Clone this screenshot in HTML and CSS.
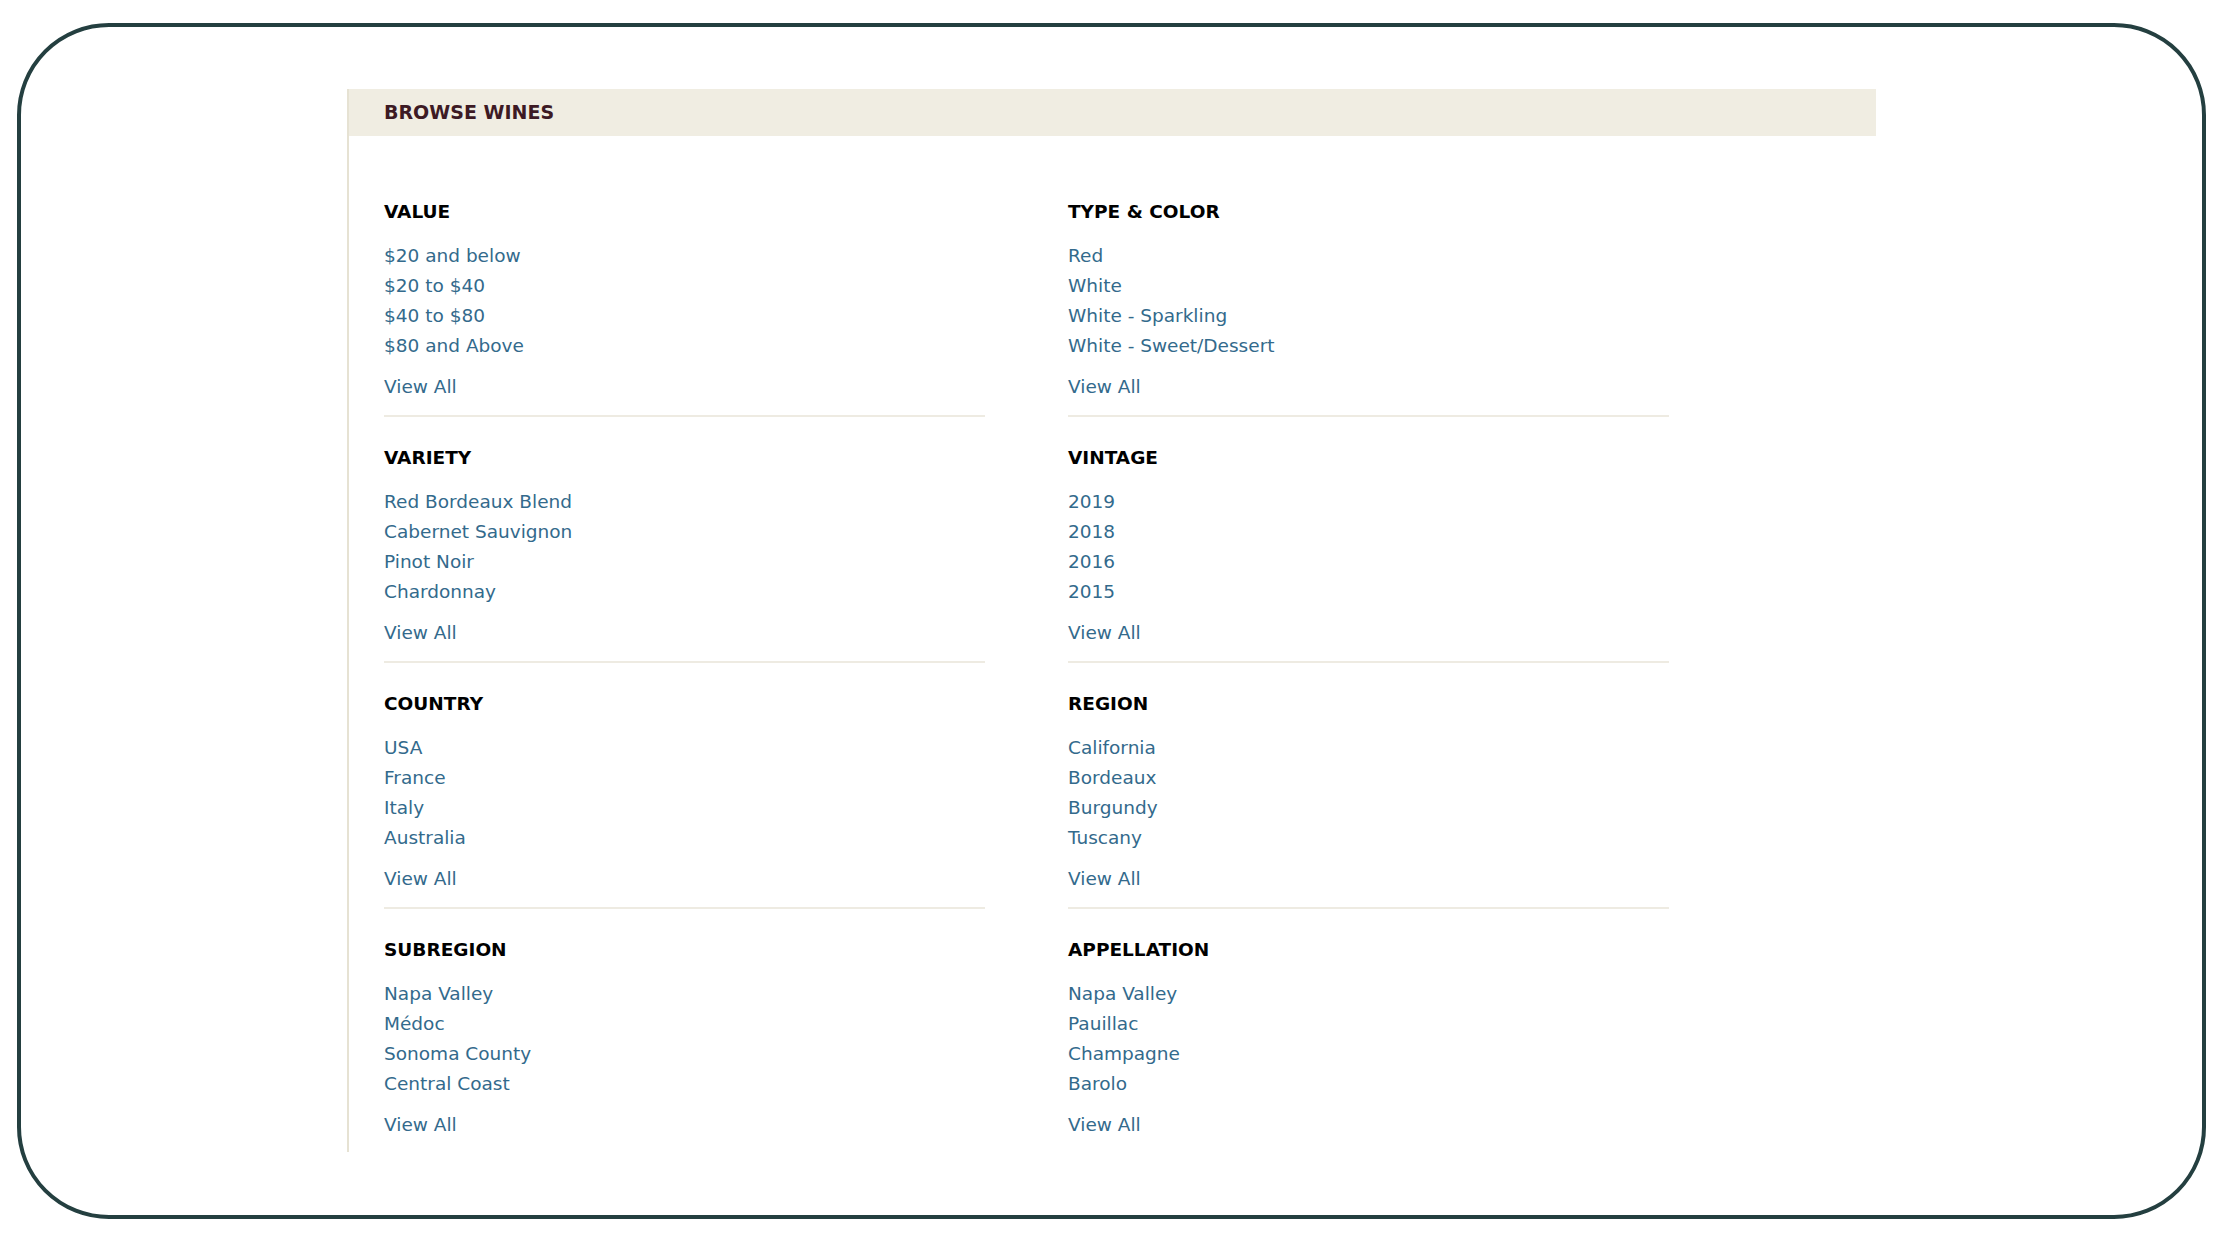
FILE: index.html
```html
<!DOCTYPE html>
<html lang="en">
<head>
<meta charset="utf-8">
<title>Browse Wines</title>
<link rel="stylesheet" href="styles.css">
</head>
<body>
<div class="frame">
  <div class="browse">
    <div class="browse-header">BROWSE WINES</div>
    <div class="browse-body">
      <section class="group">
        <h3 class="group-title">VALUE</h3>
        <ul class="group-list">
          <li><a href="#">$20 and below</a></li>
          <li><a href="#">$20 to $40</a></li>
          <li><a href="#">$40 to $80</a></li>
          <li><a href="#">$80 and Above</a></li>
        </ul>
        <a class="view-all" href="#">View All</a>
      </section>
      <section class="group">
        <h3 class="group-title">TYPE &amp; COLOR</h3>
        <ul class="group-list">
          <li><a href="#">Red</a></li>
          <li><a href="#">White</a></li>
          <li><a href="#">White - Sparkling</a></li>
          <li><a href="#">White - Sweet/Dessert</a></li>
        </ul>
        <a class="view-all" href="#">View All</a>
      </section>
      <section class="group">
        <h3 class="group-title">VARIETY</h3>
        <ul class="group-list">
          <li><a href="#">Red Bordeaux Blend</a></li>
          <li><a href="#">Cabernet Sauvignon</a></li>
          <li><a href="#">Pinot Noir</a></li>
          <li><a href="#">Chardonnay</a></li>
        </ul>
        <a class="view-all" href="#">View All</a>
      </section>
      <section class="group">
        <h3 class="group-title">VINTAGE</h3>
        <ul class="group-list">
          <li><a href="#">2019</a></li>
          <li><a href="#">2018</a></li>
          <li><a href="#">2016</a></li>
          <li><a href="#">2015</a></li>
        </ul>
        <a class="view-all" href="#">View All</a>
      </section>
      <section class="group">
        <h3 class="group-title">COUNTRY</h3>
        <ul class="group-list">
          <li><a href="#">USA</a></li>
          <li><a href="#">France</a></li>
          <li><a href="#">Italy</a></li>
          <li><a href="#">Australia</a></li>
        </ul>
        <a class="view-all" href="#">View All</a>
      </section>
      <section class="group">
        <h3 class="group-title">REGION</h3>
        <ul class="group-list">
          <li><a href="#">California</a></li>
          <li><a href="#">Bordeaux</a></li>
          <li><a href="#">Burgundy</a></li>
          <li><a href="#">Tuscany</a></li>
        </ul>
        <a class="view-all" href="#">View All</a>
      </section>
      <section class="group last">
        <h3 class="group-title">SUBREGION</h3>
        <ul class="group-list">
          <li><a href="#">Napa Valley</a></li>
          <li><a href="#">Médoc</a></li>
          <li><a href="#">Sonoma County</a></li>
          <li><a href="#">Central Coast</a></li>
        </ul>
        <a class="view-all" href="#">View All</a>
      </section>
      <section class="group last">
        <h3 class="group-title">APPELLATION</h3>
        <ul class="group-list">
          <li><a href="#">Napa Valley</a></li>
          <li><a href="#">Pauillac</a></li>
          <li><a href="#">Champagne</a></li>
          <li><a href="#">Barolo</a></li>
        </ul>
        <a class="view-all" href="#">View All</a>
      </section>
    </div>
  </div>
</div>
</body>
</html>
```

FILE: styles.css
```css
html, body {
  margin: 0;
  padding: 0;
  background: #ffffff;
}

body {
  font-family: "DejaVu Sans", Verdana, sans-serif;
  font-size: 18.5px;
  color: #000;
  padding: 23px 0 0 17px;
  box-sizing: border-box;
  height: 1240px;
}

.frame {
  width: 2189px;
  height: 1196px;
  box-sizing: border-box;
  border: 4px solid #243f40;
  border-radius: 92px;
  padding: 62px 0 0 326px;
}

.browse {
  width: 1527px;
  border-left: 2px solid #e6e2d3;
}

.browse-header {
  height: 47px;
  line-height: 47px;
  background: #f0ede2;
  padding-left: 35px;
  font-weight: bold;
  font-size: 19px;
  color: #3d1a24;
}

.browse-body {
  display: grid;
  grid-template-columns: 601px 601px;
  column-gap: 83px;
  padding: 61px 0 12px 35px;
}

.group {
  display: flex;
  flex-direction: column;
  align-items: flex-start;
  border-bottom: 2px solid #eeebe2;
  padding-bottom: 13px;
  margin-bottom: 26px;
}

.group.last {
  border-bottom: none;
  padding-bottom: 0;
  margin-bottom: 0;
}

.group-title {
  margin: 0;
  font-size: 18.5px;
  line-height: 30px;
  font-weight: bold;
  color: #000;
}

.group-list {
  list-style: none;
  margin: 14px 0 0 0;
  padding: 0;
}

.group-list li {
  line-height: 30px;
  height: 30px;
}

a {
  color: #336a8c;
  text-decoration: none;
}

.view-all {
  margin-top: 11px;
  line-height: 30px;
}
```
